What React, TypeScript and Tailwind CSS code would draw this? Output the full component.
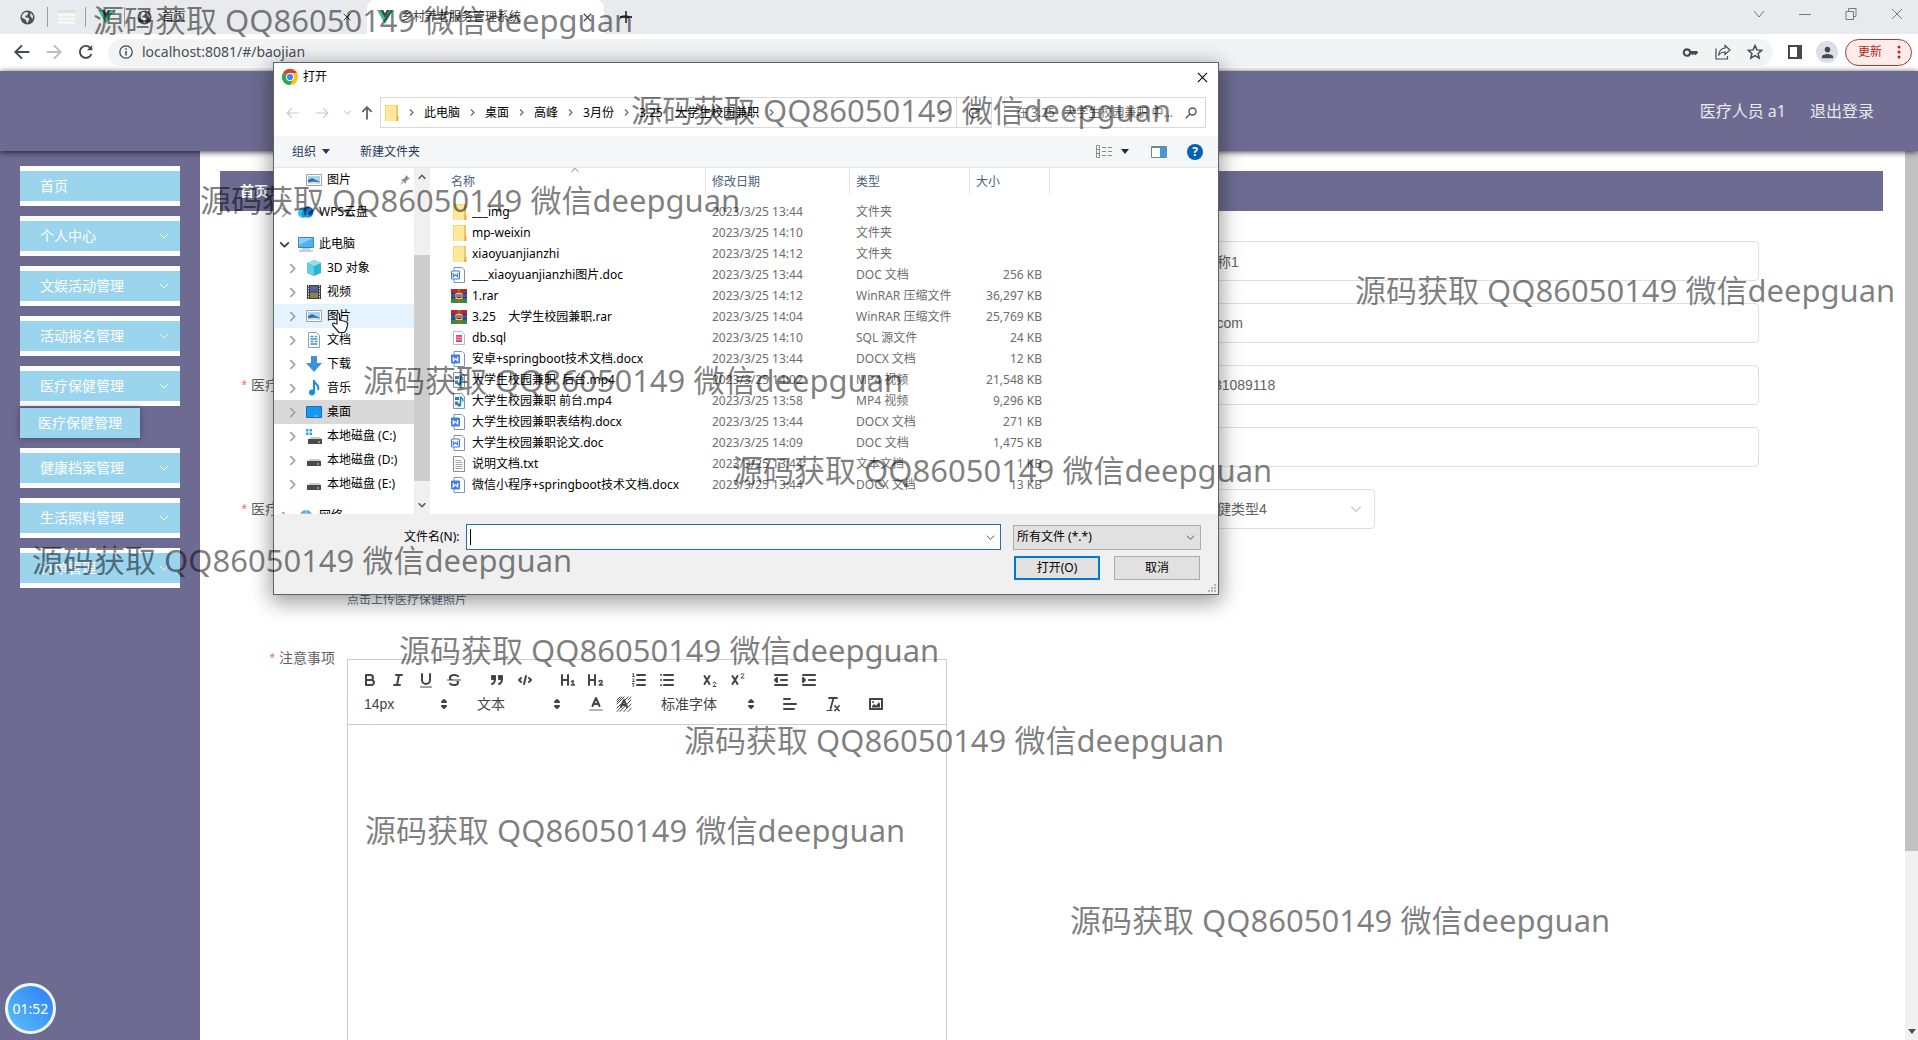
import React from "react";
import { MdKey, MdPerson } from "react-icons/md";

const UI = "font-['Noto_Sans','Noto_Sans_CJK_SC',sans-serif]";
const WEB = "font-['Liberation_Sans','Noto_Sans_CJK_SC',sans-serif]";

type P = { d: string; className?: string; size?: number; sw?: number };

function Stroke({ d, className = "", size = 12, sw = 1 }: P) {
  return (
    <svg width={size} height={size} viewBox="0 0 12 12" fill="none" stroke="currentColor" strokeWidth={sw} className={"shrink-0 " + className}>
      <path d={d} />
    </svg>
  );
}

const DOWN = "M2 4l4 4 4-4";
const UP = "M2 8l4-4 4 4";
const RIGHT = "M4 2l4 4-4 4";
const CROSS = "M1 1l10 10M11 1L1 11";

function Globe() {
  return (
    <svg width="15" height="15" viewBox="0 0 16 16" className="shrink-0">
      <circle cx="8" cy="8" r="7.5" fill="#4d5156" />
      <path d="M2 6.5C3 3.5 5 2 7.5 2L9 3.5 7.5 5.5 6 6l-.5 2H8l2 1.5L9 12l-1.500 2C7 13 7 11.500 6 10.500L2 8z" fill="#e8eaed" />
      <path d="M11 3l2.500 2.500L14 9l-1.500-.5L11 6.500z" fill="#e8eaed" />
    </svg>
  );
}

function Vue() {
  return (
    <svg width="16" height="16" viewBox="0 0 16 16" className="shrink-0">
      <path d="M0 1h3.200L8 9.300 12.800 1H16L8 15z" fill="#41b883" />
      <path d="M3.200 1H6.200L8 4.200 9.800 1h3L8 9.300z" fill="#34495e" />
    </svg>
  );
}

function Chrome() {
  return (
    <svg width="16" height="16" viewBox="0 0 16 16" className="shrink-0">
      <circle cx="8" cy="8" r="8" fill="#fbc116" />
      <path d="M8 8L1.070 4A8 8 0 0 1 14.930 4z" fill="#d93f34" />
      <path d="M8 8L1.070 4A8 8 0 0 0 8 16l3.500-6z" fill="#2da94f" />
      <path d="M8 4h6.930L11 9z" fill="#fbc116" />
      <circle cx="8" cy="8" r="4" fill="#fff" />
      <circle cx="8" cy="8" r="3.100" fill="#4285f4" />
    </svg>
  );
}

function Browser() {
  return (
    <header className={"shrink-0 " + UI}>
      <div className="flex h-[34px] items-center bg-[#e8eaed] text-xs text-[#3c4043]">
        <div className="flex items-center pl-5">
          <Globe />
          <span className="ml-3 h-5 w-px bg-[#9a9ca0]" />
          <svg width="17" height="14" viewBox="0 0 17 14" className="ml-2.5"><path d="M0 0h17v14H0z" fill="#f4f8f6" /><path d="M0 0h17v3H0z" fill="#d3e8dd" /><path d="M0 7h17M0 10.500h17" stroke="#dfe8e4" /></svg>
          <span className="ml-2.5 h-5 w-px bg-[#9a9ca0]" />
          <span className="ml-3"><Vue /></span>
          <span className="ml-2.5 h-5 w-px bg-[#9a9ca0]" />
          <span className="ml-3"><Globe /></span>
        </div>
        <div className="flex w-[215px] items-center justify-between pl-2.5 pr-4">
          <span>首页</span>
          <button aria-label="关闭标签页"><Stroke d={CROSS} size={8} sw={1.500} /></button>
        </div>
        <div className="flex h-full w-[237px] items-center rounded-t-lg bg-white pl-2.5 pr-3">
          <Vue />
          <span className="ml-2 grow whitespace-nowrap">乡村养老服务管理系统</span>
          <button aria-label="关闭标签页"><Stroke d={CROSS} size={9} sw={1.500} /></button>
        </div>
        <button aria-label="新标签页" className="ml-4"><Stroke d="M6 0v12M0 6h12" size={12} sw={1.800} /></button>
        <div className="ml-auto flex items-center gap-[34px] pb-1.5 pr-[15px] text-[#777a7e]">
          <Stroke d="M1 3l5 6 5-6" />
          <Stroke d="M0 6.500h12" />
          <Stroke d="M1 3.500h7.500v8H1zM3.500 3.500v-3H11v8H8.500" />
          <Stroke d={CROSS} />
        </div>
      </div>
      <div className="flex h-9 items-center bg-white pl-3.5 pr-1.5 text-[#46494d]">
        <button aria-label="后退"><Stroke d="M11.500 6H1M6 1L1 6l5 5" size={16} sw={1.400} /></button>
        <button aria-label="前进" className="ml-4 text-[#bcbec1]"><Stroke d="M.5 6H11M6 1l5 5-5 5" size={16} sw={1.400} /></button>
        <button aria-label="重新加载" className="ml-4"><svg width="16" height="16" viewBox="0 0 16 16" fill="none" stroke="currentColor" strokeWidth="1.900"><path d="M13.500 10A6 6 0 1 1 12.300 3.800L14 5.500" /><path d="M14.200 1v5.200H9z" fill="currentColor" stroke="none" /></svg></button>
        <div className="ml-3.5 flex h-[27px] grow items-center rounded-full bg-[#f1f3f4] pl-[11px] pr-2.5">
          <svg width="14" height="14" viewBox="0 0 14 14" fill="none" stroke="currentColor" strokeWidth="1.300"><circle cx="7" cy="7" r="6.200" /><path d="M7 6v4.500M7 3.300v1.500" strokeWidth="1.500" /></svg>
          <input aria-label="地址" className="ml-[9px] grow bg-transparent text-sm text-[#4a4d51] outline-none" defaultValue="localhost:8081/#/baojian" />
          <div className="flex items-center gap-4">
            <MdKey size={17} />
            <svg width="16" height="16" viewBox="0 0 16 16" fill="none" stroke="currentColor" strokeWidth="1.200"><path d="M1 4.500V15h11.500v-3" /><path d="M10 1.500L15 6l-5 4.500V8C7 8 5 9 3.500 11.500 4 7 6.500 4.500 10 4z" /></svg>
            <svg width="16" height="16" viewBox="0 0 16 16" fill="none" stroke="currentColor" strokeWidth="1.500"><path d="M8 1.500l1.900 4.400 4.800.4-3.600 3.200 1.100 4.700L8 11.700l-4.200 2.500 1.100-4.700L1.300 6.300l4.800-.4z" /></svg>
          </div>
        </div>
        <svg width="14" height="14" viewBox="0 0 14 14" className="ml-[15px]"><path d="M1 1h12v12H1z" fill="none" stroke="currentColor" strokeWidth="2" /><path d="M9 1h4v12H9z" fill="currentColor" /></svg>
        <span className="ml-3.5 flex size-[22px] items-center justify-center rounded-full bg-[#dbe0e7]"><MdPerson size={17} /></span>
        <button className="ml-[7px] flex h-[27px] w-[67px] items-center justify-between rounded-full border border-[#b3332e] bg-[#fdecea] pl-3 pr-2.5 text-xs text-[#b3261e]">
          更新
          <svg width="4" height="14" viewBox="0 0 4 14" fill="currentColor"><circle cx="2" cy="2" r="1.500" /><circle cx="2" cy="7" r="1.500" /><circle cx="2" cy="12" r="1.500" /></svg>
        </button>
      </div>
    </header>
  );
}

function MenuItem({ label, arrow = true }: { label: string; arrow?: boolean }) {
  return (
    <button className="flex h-10 w-full items-center justify-between border-y-5 border-white bg-[#9bd4ed] pl-5 pr-2.5 text-left text-sm text-white">
      {label}
      {arrow && <Stroke d={DOWN} size={12} className="text-white" />}
    </button>
  );
}

function Sidebar() {
  return (
    <nav className={"flex w-[200px] shrink-0 flex-col gap-2.5 bg-[#6d6b91] px-5 pt-[15px] " + UI}>
      <MenuItem label="首页" arrow={false} />
      <MenuItem label="个人中心" />
      <MenuItem label="文娱活动管理" />
      <MenuItem label="活动报名管理" />
      <div>
        <MenuItem label="医疗保健管理" />
        <button className="mt-0.5 block h-[30px] w-[120px] bg-[#9bd4ed] text-sm text-white shadow-[0_0_6px_rgba(30,30,60,0.5)]">医疗保健管理</button>
      </div>
      <MenuItem label="健康档案管理" />
      <MenuItem label="生活照料管理" />
      <MenuItem label="订单管理" />
    </nav>
  );
}

function Label({ id, text, wide, required }: { id: string; text: string; wide?: boolean; required?: boolean }) {
  return (
    <label htmlFor={id} className={"shrink-0 whitespace-nowrap pr-3 text-right text-sm leading-10 text-[#606266] " + (wide ? "w-[212px]" : "w-[127px]")}>
      {required && <span className="mr-1 text-[#f56c6c]">*</span>}
      {text}
    </label>
  );
}

function Field({ id, value = "" }: { id: string; value?: string }) {
  return (
    <div className="w-0 grow">
      <input id={id} defaultValue={value} className="block h-10 w-full rounded border border-[#dcdfe6] bg-white px-[15px] text-sm text-[#606266] outline-none" />
    </div>
  );
}

function QBtn({ label, children }: { label: string; children: React.ReactNode }) {
  return (
    <button type="button" aria-label={label} className="h-6 w-7 px-[5px] py-[3px] text-[#444]">
      <svg viewBox="0 0 18 18" className="size-[18px]" fill="none" stroke="currentColor" strokeWidth="2" strokeLinecap="round" strokeLinejoin="round">{children}</svg>
    </button>
  );
}

function QPicker({ text, wide }: { text: string; wide?: boolean }) {
  return (
    <button type="button" className={"flex h-6 items-center justify-between pl-2 pr-px text-sm text-[#444] " + (wide ? "w-[108px]" : "w-[98px]")}>
      {text}
      <svg width="18" height="18" viewBox="0 0 18 18" fill="currentColor" stroke="currentColor" strokeWidth="2" strokeLinejoin="round"><path d="M7 11l2 2 2-2zM7 7l2-2 2 2z" /></svg>
    </button>
  );
}

function Editor() {
  const F = { fill: "currentColor", stroke: "none" };
  return (
    <div className="mt-[21px] w-[600px] border border-[#ccc]">
      <div className="border-b border-[#ccc] p-2">
        <div className="flex gap-[15px]">
          <div className="flex">
            <QBtn label="粗体"><path d="M5 4h4.500A2.500 2.500 0 0 1 12 6.500 2.500 2.500 0 0 1 9.500 9H5zM5 9h5.500A2.500 2.500 0 0 1 13 11.500 2.500 2.500 0 0 1 10.500 14H5z" /></QBtn>
            <QBtn label="斜体"><path d="M7 4h6M5 14h6M8 14l2-10" /></QBtn>
            <QBtn label="下划线"><path d="M5 3v6a4 4 0 0 0 8 0V3" /><path d="M3.500 16h11" strokeWidth="1" /></QBtn>
            <QBtn label="删除线"><path d="M15.500 9h-13" strokeWidth="1" /><path {...F} d="M4.460 9c-.35-.7-.46-1.400-.46-2C4 3.700 6.920 2.900 9 2.900c2.700 0 4.500 1 5 2.200.3.900-.9 1.500-1.500.9C11.500 5 10.300 4.900 9 4.900c-1.500 0-3 .4-3 2 0 1 1 1.500 2.500 2.100zM13.600 9.900c.3.500.4 1 .4 1.600 0 2.500-2.400 3.600-5 3.600-3 0-4.500-1.200-4.900-2.300-.2-1 .9-1.400 1.500-.8.8.8 2 1.100 3.400 1.100 1.500 0 3-.5 3-1.600 0-.7-.5-1.200-1.500-1.600z" /></QBtn>
          </div>
          <div className="flex">
            <QBtn label="引用"><path fill="currentColor" d="M4 5h3v3H4zM11 5h3v3h-3z" /><path d="M7 8c0 4.031-3 5-3 5M14 8c0 4.031-3 5-3 5" /></QBtn>
            <QBtn label="代码"><path d="M5 7L3 9l2 2M13 7l2 2-2 2M10 5l-2 8" /></QBtn>
          </div>
          <div className="flex">
            <QBtn label="标题 1"><path d="M3 4v10M9 4v10M3 9h6" /><path d="M12.500 10.500L14 9.500V14M12.500 14h3" strokeWidth="1.500" /></QBtn>
            <QBtn label="标题 2"><path d="M2 4v10M8 4v10M2 9h6" /><path d="M12 10.500c.3-1.300 3.200-1.400 3.200.3 0 1.200-2.200 1.900-3 3.200h3.500" strokeWidth="1.500" /></QBtn>
          </div>
          <div className="flex">
            <QBtn label="有序列表"><path d="M7 4h8M7 9h8M7 14h8" /><path d="M2.500 3l1-.5v3M2.500 5.500h2M2.500 8c1-1 2.200 0 1 1.200L2.500 10.500h2M2.500 12.600h1.700l-1 1c1.500.2 1 1.900-.7 1.600" strokeWidth=".9" /></QBtn>
            <QBtn label="无序列表"><path d="M6 4h9M6 9h9M6 14h9M3 4h0M3 9h0M3 14h0" /></QBtn>
          </div>
          <div className="flex">
            <QBtn label="下标"><path d="M3.500 5l5 8M8.500 5l-5 8" /><path d="M12 12c.3-1.300 2.800-1.300 2.800.3 0 1-1.800 1.700-2.800 3.200h3" strokeWidth="1" /></QBtn>
            <QBtn label="上标"><path d="M3.500 5l5 8M8.500 5l-5 8" /><path d="M12 3.500c.3-1.300 2.800-1.300 2.800.3 0 1-1.800 1.700-2.800 3.200h3" strokeWidth="1" /></QBtn>
          </div>
          <div className="flex">
            <QBtn label="减少缩进"><path d="M3 14h12M3 4h12M9 9h6" /><path fill="currentColor" d="M5 7v4L3 9z" /></QBtn>
            <QBtn label="增加缩进"><path d="M3 14h12M3 4h12M9 9h6" /><path fill="currentColor" d="M3 7v4l2-2z" /></QBtn>
          </div>
        </div>
        <div className="flex gap-[15px]">
          <QPicker text="14px" />
          <QPicker text="文本" />
          <div className="flex">
            <QBtn label="文字颜色"><path d="M3 15h12" opacity=".4" /><path d="M5.500 11L9 3l3.500 8M6.600 9h4.800" /></QBtn>
            <QBtn label="背景颜色"><path d="M2 5l3-3M2 9l7-7M2 13L13 2M2 16.500L6 12M5 16.500L16 5M9 16.500L16 9M13 16.500l3-3M13 5l3-3M2 7l5-5M11 4l2-2" strokeWidth="1" /><path d="M6 12l3-7 3 7M7 10h4" /></QBtn>
          </div>
          <QPicker text="标准字体" wide />
          <QBtn label="对齐"><path d="M3 9h12M3 14h10M3 4h6" /></QBtn>
          <QBtn label="清除格式"><path d="M5 3h8M6.500 14L9.500 3" strokeWidth="1.800" /><path d="M3 15.500h5" strokeWidth="1" /><path d="M11 11l4 4.500M15 11l-4 4.500" strokeWidth="1.800" /></QBtn>
          <QBtn label="图片"><path d="M3 4h12v10H3z" /><circle {...F} cx="6" cy="7" r="1" /><path {...F} d="M5 12.500V11l2-2 2 1.500L12 7l1 2v3.500z" /></QBtn>
        </div>
      </div>
      <textarea id="note" className="block h-[420px] w-full resize-none bg-transparent p-3 text-sm outline-none" />
    </div>
  );
}

function Page() {
  return (
    <div className="flex min-h-0 grow flex-col pt-px">
      <div className={"relative z-10 flex h-20 shrink-0 items-center justify-end gap-6 bg-[#6d6b91] pr-11 text-base text-white/85 shadow-[0_1px_6px_rgba(0,0,0,0.75)] " + UI}>
        <span>医疗人员 a1</span>
        <a href="#logout">退出登录</a>
      </div>
      <div className="flex min-h-0 grow overflow-hidden">
        <Sidebar />
        <main className={"grow px-5 pt-5 pr-[22px] " + WEB}>
          <div className="flex h-10 items-center bg-[#6d6b91] px-5 text-sm font-bold text-white">首页</div>
          <form className="mt-[30px] pr-[124px]">
            <div className="flex flex-col gap-[22px]">
              <div className="flex"><Label id="a1" text="服务编号" /><Field id="a1" /><Label id="b1" text="服务名称" wide /><Field id="b1" value="服务名称1" /></div>
              <div className="flex"><Label id="a2" text="服务账号" /><Field id="a2" /><Label id="b2" text="邮箱" wide /><Field id="b2" value="1@qq.com" /></div>
              <div className="flex"><Label id="a3" text="医疗保健编号" required /><Field id="a3" /><Label id="b3" text="编号" wide /><Field id="b3" value="1679731089118" /></div>
              <div className="flex"><Label id="a4" text="医疗人员" /><Field id="a4" /><Label id="b4" text="价格" wide /><Field id="b4" /></div>
              <div className="flex">
                <Label id="a5" text="医疗保健名称" required /><Field id="a5" /><Label id="b5" text="保健类型" wide />
                <div className="w-0 grow">
                  <div className="flex h-10 w-[216px] items-center rounded border border-[#dcdfe6] pl-[15px] pr-[11px]">
                    <select id="b5" className="w-0 grow appearance-none bg-transparent text-sm text-[#606266] outline-none"><option>医疗保健类型4</option></select>
                    <Stroke d={DOWN} size={14} className="text-[#c0c4cc]" />
                  </div>
                </div>
              </div>
              <div className="pl-[127px]">
                <button type="button" aria-label="上传" className="block h-[41px] w-full" />
                <p className="pb-2 text-xs leading-4 text-[#606f83]">点击上传医疗保健照片</p>
              </div>
              <div className="flex">
                <Label id="note" text="注意事项" required />
                <Editor />
              </div>
            </div>
          </form>
        </main>
        <div className="flex w-[13px] shrink-0 flex-col items-center justify-between bg-[#f1f1f1]">
          <div className="h-[700px] w-full bg-[#c1c1c1]" />
          <svg width="8" height="5" viewBox="0 0 8 5" className="mb-1.5"><path d="M0 0h8L4 5z" fill="#505050" /></svg>
        </div>
      </div>
    </div>
  );
}

function Folder() {
  return (
    <svg width="14" height="16" viewBox="0 0 14 16" className="shrink-0">
      <path d="M0 0h11v16H0z" fill="#f8d775" /><path d="M1 1h10v15H1z" fill="#fde89c" /><path d="M11 0h2v11l-2 5z" fill="#efc75e" /><path d="M12 11h1.500v5H11z" fill="#e3b13c" />
    </svg>
  );
}

type Kind = "folder" | "doc" | "docx" | "rar" | "sql" | "mp4" | "txt";

function FileIcon({ kind }: { kind: Kind }) {
  switch (kind) {
    case "folder":
      return <span className="ml-0.5"><Folder /></span>;
    case "doc":
    case "docx": {
      const solid = kind === "docx";
      return (
        <svg width="16" height="16" viewBox="0 0 16 16">
          <path d="M3 .5h8L13.500 3v12.500H3z" fill="#fff" stroke="#7d93b8" />
          <path d="M.5 4h8v8h-8z" fill={solid ? "#417ee0" : "#fff"} stroke="#417ee0" />
          <path d="M2.300 6v3.800L4.500 7.500l2.200 2.300V6" fill="none" stroke={solid ? "#fff" : "#417ee0"} strokeWidth="1.200" />
        </svg>
      );
    }
    case "rar":
      return (
        <svg width="16" height="16" viewBox="0 0 16 16">
          <path d="M0 1h16v4.500H0z" fill="#b5283a" /><path d="M0 5.500h16V10H0z" fill="#3f51a8" /><path d="M0 10h16v5H0z" fill="#33884a" />
          <path d="M6.500 1h3v14h-3z" fill="#a8641e" /><path d="M4.500 5h7v6h-7z" fill="#d9c9a8" /><path d="M6 6v3.500h4V6M8 6v3.500" fill="none" stroke="#7a2a2a" />
          <path d="M0 5.500h4.500M0 10h4.500M11.500 5.500H16M11.500 10H16" stroke="#222" strokeWidth=".7" />
        </svg>
      );
    case "sql":
      return (
        <svg width="16" height="16" viewBox="0 0 16 16">
          <path d="M2.500 1.500h8L13.500 4v10.500h-11z" fill="#fff" stroke="#b9b9b9" /><path d="M5 5h6v7H5z" fill="#e0446f" /><path d="M5 7.300h6M5 9.700h6" stroke="#fbd0dc" strokeWidth=".7" />
        </svg>
      );
    case "mp4":
      return (
        <svg width="16" height="16" viewBox="0 0 16 16">
          <path d="M2.500.5h8l3 3v12h-11z" fill="#f3f8fb" stroke="#8a979f" /><path d="M4 4h4v3H4zM4 8.500h3V12H4z" fill="#4b7c96" /><path d="M9.500 4v8" stroke="#1284cf" strokeWidth="1.500" /><circle cx="8.200" cy="12" r="1.800" fill="#1284cf" /><path d="M9.500 3.500c.5 2 3 2 2.500 5" fill="none" stroke="#1284cf" strokeWidth="1.300" />
        </svg>
      );
    case "txt":
      return (
        <svg width="16" height="16" viewBox="0 0 16 16">
          <path d="M2.500.5h8l3 3v12h-11z" fill="#fff" stroke="#8c8c8c" /><path d="M4.500 4.500h6M4.500 6.500h7M4.500 8.500h7M4.500 10.500h7M4.500 12.500h7" stroke="#a5a5a5" />
        </svg>
      );
  }
}

const FILES: [Kind, string, string, string, string][] = [
  ["folder", "___img", "2023/3/25 13:44", "文件夹", ""],
  ["folder", "mp-weixin", "2023/3/25 14:10", "文件夹", ""],
  ["folder", "xiaoyuanjianzhi", "2023/3/25 14:12", "文件夹", ""],
  ["doc", "___xiaoyuanjianzhi图片.doc", "2023/3/25 13:44", "DOC 文档", "256 KB"],
  ["rar", "1.rar", "2023/3/25 14:12", "WinRAR 压缩文件", "36,297 KB"],
  ["rar", "3.25    大学生校园兼职.rar", "2023/3/25 14:04", "WinRAR 压缩文件", "25,769 KB"],
  ["sql", "db.sql", "2023/3/25 14:10", "SQL 源文件", "24 KB"],
  ["docx", "安卓+springboot技术文档.docx", "2023/3/25 13:44", "DOCX 文档", "12 KB"],
  ["mp4", "大学生校园兼职  后台.mp4", "2023/3/25 14:02", "MP4 视频", "21,548 KB"],
  ["mp4", "大学生校园兼职 前台.mp4", "2023/3/25 13:58", "MP4 视频", "9,296 KB"],
  ["docx", "大学生校园兼职表结构.docx", "2023/3/25 13:44", "DOCX 文档", "271 KB"],
  ["doc", "大学生校园兼职论文.doc", "2023/3/25 14:09", "DOC 文档", "1,475 KB"],
  ["txt", "说明文档.txt", "2023/3/25 13:44", "文本文档", "1 KB"],
  ["docx", "微信小程序+springboot技术文档.docx", "2023/3/25 13:44", "DOCX 文档", "13 KB"],
];

const drive = <><path d="M2 8l2-2h9l2 2z" fill="#c9c9c9" /><path d="M1 8h14v5H1z" fill="#4a4a4a" /><path d="M11 11h2" stroke="#7fd08a" strokeWidth="1.500" /></>;
const picture = <><path d="M.5 2.500h15v11H.5z" fill="#fff" stroke="#9aa3ab" /><path d="M2 4h12v8H2z" fill="#a9d4f2" /><path d="M2 8l4-2 8 4v2H2z" fill="#3b6f9c" /><path d="M2 10.500c4-1 8-1 12 0V12H2z" fill="#cfe3ea" /></>;

const NAV_ART: Record<string, React.ReactNode> = {
  picture,
  wps: <><circle cx="5" cy="9" r="5" fill="#31c5ee" /><circle cx="10" cy="8" r="5.500" fill="#1769d2" /><path d="M3 10c3-5 6-5 9 3H5z" fill="#0f9fe0" /></>,
  pc: <><path d="M.5 1.500h15v10H.5z" fill="#4fb4f0" stroke="#3a86b8" /><path d="M1 2h14L1 9z" fill="#8ad0f8" /><path d="M4 13h8M1 15h14" stroke="#8aa0b0" /></>,
  cube: <><path d="M8 0l7 3v10l-7 3-7-3V3z" fill="#2bb5cf" /><path d="M8 0l7 3-7 3-7-3z" fill="#8fe3ee" /><path d="M1 3l7 3v10l-7-3z" fill="#5fd0e0" /></>,
  video: <><path d="M1 1h14v14H1z" fill="#3c3c46" /><path d="M4 2h8v5.500H4z" fill="#55609c" /><path d="M4 8.500h8V14H4z" fill="#8a8354" /><path d="M2.500 1v14M13.500 1v14" stroke="#e8e8e8" strokeDasharray="1.500 1.200" /></>,
  doc: <><path d="M2.500.5h8l3 3v12h-11z" fill="#fff" stroke="#8ba2b0" /><path d="M4.500 4.500h3M9 4.500h2M4.500 7h7M4.500 9.500h3M9 9.500h2.500M4.500 12h7" stroke="#3e93c7" strokeWidth="1.300" /></>,
  down: <path d="M5 0h6v7h5l-8 9-8-9h5z" fill="#3b93dd" />,
  music: <><path d="M8 0v12" stroke="#1a8fe0" strokeWidth="2" /><circle cx="6" cy="12.500" r="3" fill="#1a8fe0" /><path d="M8 1c1 3 6 4 4 9" fill="none" stroke="#1a8fe0" strokeWidth="2" /></>,
  desk: <><path d="M.5 2.500h15v11H.5z" fill="#1797f0" stroke="#0d6fbf" /><path d="M9 12h4" stroke="#fff" strokeDasharray="1 1" /></>,
  driveC: <><g transform="translate(1 3)">{drive}</g><path d="M0 1h2.500v2.500H0zM3.500 1H6v2.500H3.500zM0 4.500h2.500V7H0zM3.500 4.500H6V7H3.500z" fill="#22a7e8" /></>,
  drive: <g transform="translate(0 1)">{drive}</g>,
  net: <><circle cx="8" cy="8" r="6" fill="#5aa9d8" /><path d="M8 2v12M3 6h10" stroke="#bfe0f2" /></>,
};

function NavRow({ art, text, depth = 1, open, bg = "", arrow = true, pin }: { art: string; text: string; depth?: number; open?: boolean; bg?: string; arrow?: boolean; pin?: boolean }) {
  return (
    <li className={"flex h-6 items-center whitespace-nowrap text-xs text-black " + (depth ? "pl-3 " : "pl-1 ") + bg}>
      {arrow ? (
        <Stroke d={open ? DOWN : RIGHT} size={13} sw={1.500} className={open ? "text-[#333]" : "text-[#a0a0a0]"} />
      ) : (
        <span className="w-[13px]" />
      )}
      <svg width="16" height="16" viewBox="0 0 16 16" className="ml-[7px] mr-[5px] shrink-0">{NAV_ART[art]}</svg>
      <span>{text}</span>
      {pin && <svg width="10" height="10" viewBox="0 0 10 10" className="ml-auto mr-1"><path d="M6 0l4 4-2 .5-2 2L5.500 9 1 4.500 3.500 4l2-2zM3 6L0 10l4-3z" fill="#8a8f94" /></svg>}
    </li>
  );
}

const TH = "h-[27px] border-r border-[#e5e5e5] pl-1.5 text-left font-normal text-[#4c607a]";

function Dialog() {
  return (
    <section role="dialog" aria-label="打开" className={"absolute left-[273px] top-[62px] z-20 w-[946px] border border-[#606163] bg-white text-xs text-black shadow-[0_5px_20px_2px_rgba(0,0,0,0.4)] " + UI}>
      <div className="flex h-7 items-center pl-2 pr-2.5">
        <Chrome />
        <span className="ml-[5px] grow">打开</span>
        <button aria-label="关闭"><Stroke d={CROSS} size={11} sw={1.200} /></button>
      </div>
      <div className="flex items-center px-3 pb-2 pt-1.5">
        <Stroke d="M11.500 6H1M5 2L1 6l4 4" size={14} className="text-[#c9c9c9]" />
        <Stroke d="M.5 6H11M7 2l4 4-4 4" size={14} className="ml-[15px] text-[#c9c9c9]" />
        <Stroke d={DOWN} size={9} sw={1.500} className="ml-3.5 text-[#cfcfcf]" />
        <Stroke d="M6 11.500V1M2 5l4-4 4 4" size={14} sw={1.500} className="ml-2 text-[#5f5f5f]" />
        <div className="ml-1.5 flex h-[31px] grow border border-[#d9d9d9]">
          <div className="flex grow items-center pl-1">
            <Folder />
            {["此电脑", "桌面", "高峰", "3月份", "3.25    大学生校园兼职"].map((t) => (
              <span key={t} className="flex items-center whitespace-pre">
                <Stroke d={RIGHT} size={9} sw={1.600} className="mx-2 text-[#6a6a6a]" />
                {t}
              </span>
            ))}
            <Stroke d={RIGHT} size={9} sw={1.600} className="mx-2 text-[#6a6a6a]" />
          </div>
          <Stroke d={DOWN} size={10} sw={1.500} className="mr-2.5 self-center text-[#555]" />
          <button aria-label="刷新" className="flex w-[35px] items-center justify-center border-l border-[#d9d9d9]">
            <svg width="12" height="12" viewBox="0 0 12 12" fill="none" stroke="#555" strokeWidth="1.300"><path d="M10 8.500A4.700 4.700 0 1 1 9.500 3L11 4.500M11 1v3.500H7.500" /></svg>
          </button>
        </div>
        <div className="ml-3 flex h-[31px] w-[202px] items-center justify-between whitespace-pre border border-[#d9d9d9] pl-[11px] pr-2 text-[#6d6d6d]">
          在 3.25   大学生校园兼职 中...
          <svg width="12" height="12" viewBox="0 0 12 12" fill="none" stroke="#555" strokeWidth="1.400"><circle cx="7.500" cy="4.500" r="3.500" /><path d="M5 7L.8 11.200" /></svg>
        </div>
      </div>
      <div className="flex h-8 items-center border-b border-[#e3e5e6] bg-[#f5f6f7] pl-[18px] pr-[15px] text-[#1e395b]">
        <button className="flex items-center gap-1.5">组织<svg width="8" height="5" viewBox="0 0 8 5"><path d="M0 0h8L4 5z" fill="#1e395b" /></svg></button>
        <button className="ml-[30px]">新建文件夹</button>
        <button aria-label="视图" className="ml-auto flex items-center">
          <svg width="16" height="13" viewBox="0 0 16 13" fill="none" stroke="#8a8a8a"><path d="M.5.500h3v12h-3zM.5 4.500h3M.5 8.500h3M6 2.500h4M6 6.500h4M6 10.500h4M12 2.500h4M12 6.500h4M12 10.500h4" /></svg>
          <svg width="8" height="5" viewBox="0 0 8 5" className="ml-[9px]"><path d="M0 0h8L4 5z" fill="#1e2c3b" /></svg>
        </button>
        <button aria-label="预览窗格" className="ml-[22px]"><svg width="16" height="12" viewBox="0 0 16 12"><path d="M.5.500h15v11H.5z" fill="#fff" stroke="#6f8796" /><path d="M.5 1.500h15" stroke="#6f8796" /><path d="M9 2h6v9H9z" fill="#3f9be0" /></svg></button>
        <button aria-label="帮助" className="ml-5 flex size-4 items-center justify-center rounded-full bg-[#0063b1] font-bold text-white">?</button>
      </div>
      <div className="flex h-[346px]">
        <ul className="h-full w-[140px] shrink-0 overflow-hidden">
          <NavRow art="picture" text="图片" arrow={false} pin />
          <li className="h-2" />
          <NavRow art="wps" text="WPS云盘" depth={0} />
          <li className="h-2" />
          <NavRow art="pc" text="此电脑" depth={0} open />
          <NavRow art="cube" text="3D 对象" />
          <NavRow art="video" text="视频" />
          <NavRow art="picture" text="图片" bg="bg-[#e5f3ff]" />
          <NavRow art="doc" text="文档" />
          <NavRow art="down" text="下载" />
          <NavRow art="music" text="音乐" />
          <NavRow art="desk" text="桌面" bg="bg-[#d9d9d9]" />
          <NavRow art="driveC" text="本地磁盘 (C:)" />
          <NavRow art="drive" text="本地磁盘 (D:)" />
          <NavRow art="drive" text="本地磁盘 (E:)" />
          <li className="h-2" />
          <NavRow art="net" text="网络" depth={0} />
        </ul>
        <div className="flex h-full w-4 shrink-0 flex-col items-center bg-[#f0f0f0] text-[#505050]">
          <Stroke d={UP} size={10} sw={1.800} className="mt-1" />
          <div className="mt-[73px] h-[226px] w-full bg-[#cdcdcd]" />
          <Stroke d={DOWN} size={10} sw={1.800} className="mb-1 mt-auto" />
        </div>
        <div className="relative grow pl-[15px]">
          <Stroke d={UP} size={10} className="absolute left-[140px] top-[-3px] text-[#555]" />
          <table className="table-fixed border-separate border-spacing-0">
            <colgroup><col className="w-[261px]" /><col className="w-36" /><col className="w-[120px]" /><col className="w-20" /></colgroup>
            <thead>
              <tr><th className={TH}>名称</th><th className={TH}>修改日期</th><th className={TH}>类型</th><th className={TH}>大小</th></tr>
              <tr><td className="h-1.5" /></tr>
            </thead>
            <tbody>
              {FILES.map(([k, n, d, t, s]) => (
                <tr key={n} className="h-[21px] text-[#6d6d6d]">
                  <td className="p-0 pl-1.5 text-black"><span className="flex items-center whitespace-pre"><span className="flex w-[21px] shrink-0"><FileIcon kind={k} /></span>{n}</span></td>
                  <td className="whitespace-nowrap p-0 pl-1.5">{d}</td>
                  <td className="whitespace-nowrap p-0 pl-1.5">{t}</td>
                  <td className="whitespace-nowrap p-0 pr-2 text-right">{s}</td>
                </tr>
              ))}
            </tbody>
          </table>
        </div>
      </div>
      <div className="relative bg-[#f0f0f0] pb-3.5 pl-[130px] pr-[17px] pt-2.5">
        <div className="flex items-center">
          <label htmlFor="fname">文件名(N):</label>
          <div className="ml-auto flex h-[26px] w-[535px] items-center border border-[#26709e] bg-white pl-[3px] pr-1">
            <span className="h-4 w-px bg-black" />
            <input id="fname" className="h-full w-0 grow bg-transparent outline-none" />
            <Stroke d={DOWN} size={11} className="text-[#444]" />
          </div>
          <div className="ml-3 flex h-[25px] w-[188px] items-center border border-[#adadad] bg-[#e1e1e1] pl-[3px] pr-1">
            <select aria-label="文件类型" className="w-0 grow appearance-none bg-transparent outline-none"><option>所有文件 (*.*)</option></select>
            <Stroke d={DOWN} size={11} className="text-[#444]" />
          </div>
        </div>
        <div className="mt-1.5 flex justify-end gap-3.5 pr-px">
          <button className="h-6 w-[86px] border-2 border-[#0078d7] bg-[#e1e1e1]">打开(O)</button>
          <button className="h-6 w-[86px] border border-[#adadad] bg-[#e1e1e1]">取消</button>
        </div>
        <svg width="8" height="8" viewBox="0 0 8 8" className="absolute bottom-0.5 right-0.5" fill="#b5b5b5"><path d="M6 0h2v2H6zM3 3h2v2H3zM6 3h2v2H6zM0 6h2v2H0zM3 6h2v2H3zM6 6h2v2H6z" /></svg>
      </div>
    </section>
  );
}

const MARKS: [number, number][] = [
  [93, 22], [631, 112], [200, 202], [1355, 292], [363, 382], [732, 472], [32, 562], [399, 652], [684, 742], [365, 832], [1070, 922],
];

export default function App() {
  return (
    <div className="relative flex h-screen flex-col overflow-hidden bg-white">
      <Browser />
      <Page />
      <Dialog />
      <div className={"absolute bottom-1.5 left-[5px] z-20 flex size-[51px] items-center justify-center rounded-full border-3 border-[#eef7ff] bg-linear-to-tr from-[#5cc0fb] to-[#2f7df5] text-sm text-white " + UI}>01:52</div>
      <svg width="18" height="22" viewBox="0 0 18 22" className="absolute left-[331px] top-[312px] z-30" fill="#fff" stroke="#222" strokeWidth="1.200" strokeLinejoin="round">
        <path d="M6 12V2.500C6 .5 8.500.5 8.500 2.500V8l6 1.500c2 .5 2.500 1.500 2 3.500l-1 4.500-2 3H8L2 13.500c-1.500-2 .5-3 2-2z" />
      </svg>
      <div aria-hidden="true" className={"pointer-events-none absolute inset-0 z-40 text-[31px] leading-10 text-black/50 " + UI}>
        {MARKS.map(([x, y]) => (
          <span key={y} className="absolute whitespace-nowrap" style={{ left: x, top: y - 22 }}>源码获取 QQ86050149 微信deepguan</span>
        ))}
      </div>
    </div>
  );
}
